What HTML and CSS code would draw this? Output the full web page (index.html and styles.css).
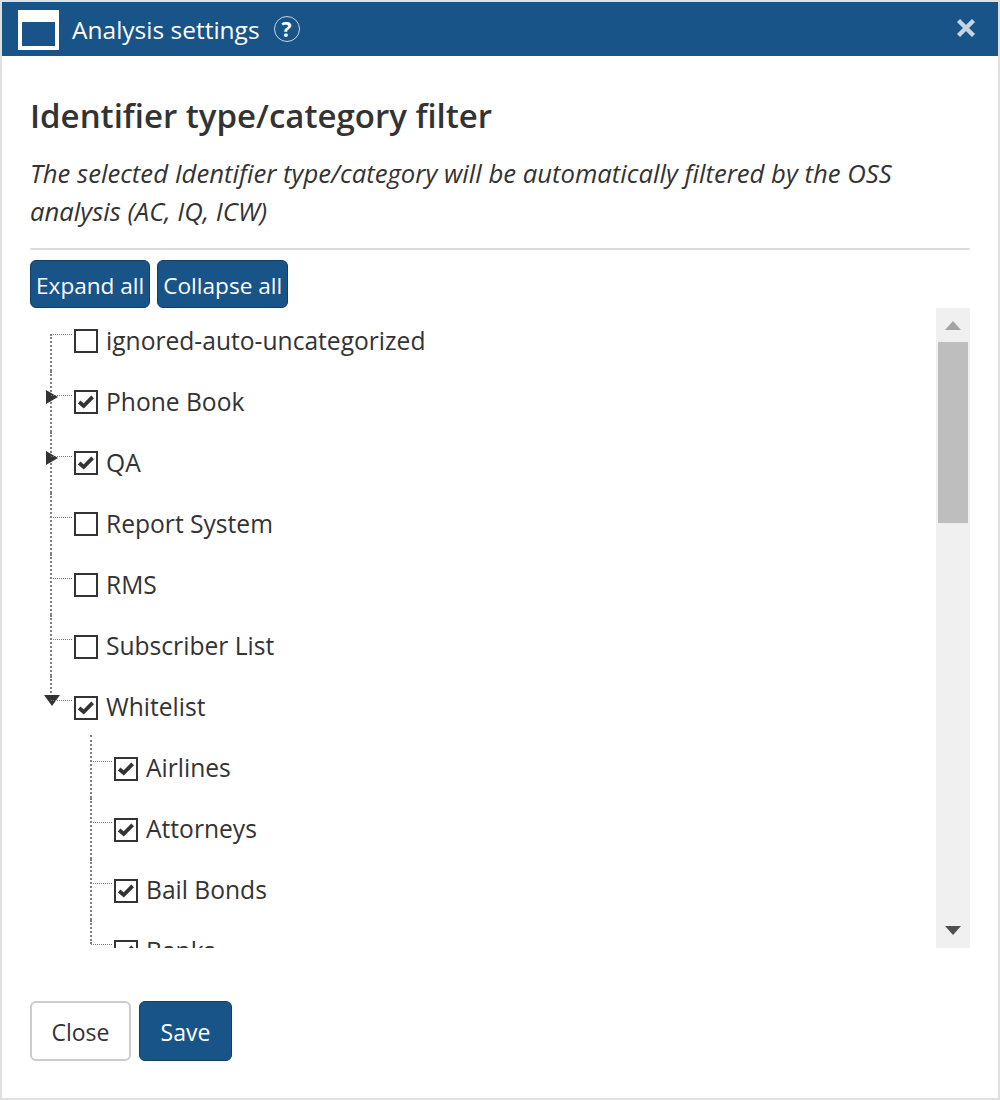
FILE: index.html
```html
<!DOCTYPE html>
<html lang="en">
<head>
    <meta charset="UTF-8">
    <title>Analysis settings</title>
    <link rel="stylesheet" href="styles.css">
</head>
<body>
    <svg class="defs" width="0" height="0">
        <symbol id="tick" viewBox="0 0 19 19">
            <path d="M3 9.5 L7.3 13.3 L15.8 4.6" fill="none" stroke="#333" stroke-width="3.6"/>
        </symbol>
    </svg>
    <div class="dialog">
        <header class="titlebar">
            <span class="window-icon"></span>
            <span class="dialog-title">Analysis settings</span>
            <span class="help">?</span>
            <svg class="close-x" width="22" height="22" viewBox="0 0 22 22">
                <path d="M3.5 3.5 L18.5 18.5 M18.5 3.5 L3.5 18.5" stroke="#c6d5e3" stroke-width="4.4" fill="none"/>
            </svg>
        </header>
        <div class="content">
            <h2>Identifier type/category filter</h2>
            <p class="note">The selected Identifier type/category will be automatically filtered by the OSS analysis (AC, IQ, ICW)</p>
            <hr>
            <div class="tree-buttons">
                <button class="btn btn-primary btn-small">Expand all</button>
                <button class="btn btn-primary btn-small">Collapse all</button>
            </div>
            <div class="tree-box">
                <div class="tree-scroll">
                    <ul class="tree tree-root">
                        <li><span class="box"></span>ignored-auto-uncategorized</li>
                        <li class="closed"><span class="box"><svg><use href="#tick"/></svg></span>Phone Book</li>
                        <li class="closed"><span class="box"><svg><use href="#tick"/></svg></span>QA</li>
                        <li><span class="box"></span>Report System</li>
                        <li><span class="box"></span>RMS</li>
                        <li><span class="box"></span>Subscriber List</li>
                        <li class="open"><span class="box"><svg><use href="#tick"/></svg></span>Whitelist</li>
                    </ul>
                    <ul class="tree tree-sub">
                        <li><span class="box"><svg><use href="#tick"/></svg></span>Airlines</li>
                        <li><span class="box"><svg><use href="#tick"/></svg></span>Attorneys</li>
                        <li><span class="box"><svg><use href="#tick"/></svg></span>Bail Bonds</li>
                        <li><span class="box"><svg><use href="#tick"/></svg></span>Banks</li>
                    </ul>
                </div>
                <div class="scrollbar">
                    <span class="arrow-up"></span>
                    <div class="track"><div class="thumb"></div></div>
                    <span class="arrow-down"></span>
                </div>
            </div>
            <div class="footer-buttons">
                <button class="btn btn-default">Close</button>
                <button class="btn btn-primary">Save</button>
            </div>
        </div>
    </div>
</body>
</html>
```
FILE: styles.css
```css
* {
    box-sizing: border-box;
}

body {
    margin: 0;
    font-family: "Open Sans", "Noto Sans", sans-serif;
    color: #333;
    background: #fff;
}

.defs {
    position: absolute;
}

.dialog {
    width: 1000px;
    height: 1100px;
    border: 2px solid #e0e0e0;
    background: #fff;
}

.titlebar {
    display: flex;
    align-items: center;
    height: 54px;
    padding: 0 21px 0 16px;
    background: #185488;
    color: #fff;
}

.window-icon {
    width: 41px;
    height: 40px;
    border: 4px solid #fff;
    border-top-width: 12px;
    margin-top: 1px;
}

.dialog-title {
    margin-left: 13px;
    font-size: 24.5px;
}

.help {
    display: flex;
    align-items: center;
    justify-content: center;
    width: 26px;
    height: 26px;
    margin-left: 14px;
    border: 1px solid #c6d5e3;
    border-radius: 50%;
    font-size: 21px;
    font-weight: 700;
}

.close-x {
    margin-left: auto;
    margin-top: -2px;
}

.content {
    padding: 0 28px;
}

h2 {
    margin: 0;
    padding-top: 35px;
    font-size: 33px;
    line-height: 50px;
    font-weight: 600;
}

.note {
    margin: 14px 0 0;
    font-size: 25.7px;
    line-height: 38px;
    font-style: italic;
}

hr {
    height: 2px;
    margin: 17px 0 10px;
    border: 0;
    background: #ddd;
}

.tree-buttons {
    display: flex;
    gap: 7px;
    height: 48px;
}

.btn {
    font-family: inherit;
    border-radius: 6px;
    cursor: pointer;
}

.btn-primary {
    background: #185488;
    border: 1px solid #113f68;
    color: #fff;
}

.btn-default {
    background: #fff;
    border: 2px solid #ccc;
    color: #333;
}

.btn-small {
    padding: 2px 5px 0;
    font-size: 22.6px;
}

.tree-box {
    display: flex;
    height: 640px;
}

.tree-scroll {
    flex: 1;
    overflow: hidden;
    padding-top: 1.5px;
}

.tree {
    list-style: none;
    margin: 0;
    padding: 0 0 0 45px;
    font-size: 24.6px;
}

.tree li {
    position: relative;
    display: flex;
    align-items: center;
    height: 61.1px;
}

/* dotted connectors */
.tree li::before {
    content: "";
    position: absolute;
    left: -25px;
    top: 0;
    height: 100%;
    border-left: 2px dotted #808080;
}

.tree li::after {
    content: "";
    position: absolute;
    left: -24px;
    top: 24px;
    width: 21px;
    border-top: 1px dotted #808080;
}

.tree-root > li:first-child::before {
    top: 24px;
    height: calc(100% - 24px);
}

.tree li.open::before {
    height: 24px;
}

.tree-sub {
    padding-left: 85px;
}

.tree-sub > li:first-child::before {
    top: -2px;
    height: calc(100% + 2px);
}

.tree-sub li:last-child::before {
    height: 24px;
}

.tree li.closed .box::before,
.tree li.open .box::before {
    content: "";
    position: absolute;
    width: 0;
    height: 0;
}

.tree li.closed .box::before {
    left: -29px;
    top: 19px;
    border-left: 12px solid #333;
    border-top: 7px solid transparent;
    border-bottom: 7px solid transparent;
}

.tree li.open .box::before {
    left: -31px;
    top: 19px;
    border-top: 11px solid #333;
    border-left: 8px solid transparent;
    border-right: 8px solid transparent;
}

.box {
    width: 24px;
    height: 24px;
    margin: 2px 8px 0 -1px;
    border: 2px solid #333;
    background: #fff;
    flex-shrink: 0;
}

.box svg {
    display: block;
    width: 20px;
    height: 20px;
}

.scrollbar {
    display: flex;
    flex-direction: column;
    align-items: center;
    width: 34px;
    background: #f0f0f0;
}

.arrow-up {
    width: 0;
    height: 0;
    margin-top: 13px;
    border-bottom: 9px solid #a3a3a3;
    border-left: 8px solid transparent;
    border-right: 8px solid transparent;
}

.track {
    flex: 1;
    width: 100%;
    padding: 12px 2px 0;
}

.thumb {
    height: 181px;
    background: #bebebe;
}

.arrow-down {
    width: 0;
    height: 0;
    margin-bottom: 13px;
    border-top: 9px solid #505050;
    border-left: 8px solid transparent;
    border-right: 8px solid transparent;
}

.footer-buttons {
    display: flex;
    gap: 8px;
    margin-top: 53px;
}

.footer-buttons .btn {
    height: 60px;
    padding-top: 3px;
    font-size: 23px;
}

.footer-buttons .btn-default {
    width: 101px;
}

.footer-buttons .btn-primary {
    width: 93px;
}
```
